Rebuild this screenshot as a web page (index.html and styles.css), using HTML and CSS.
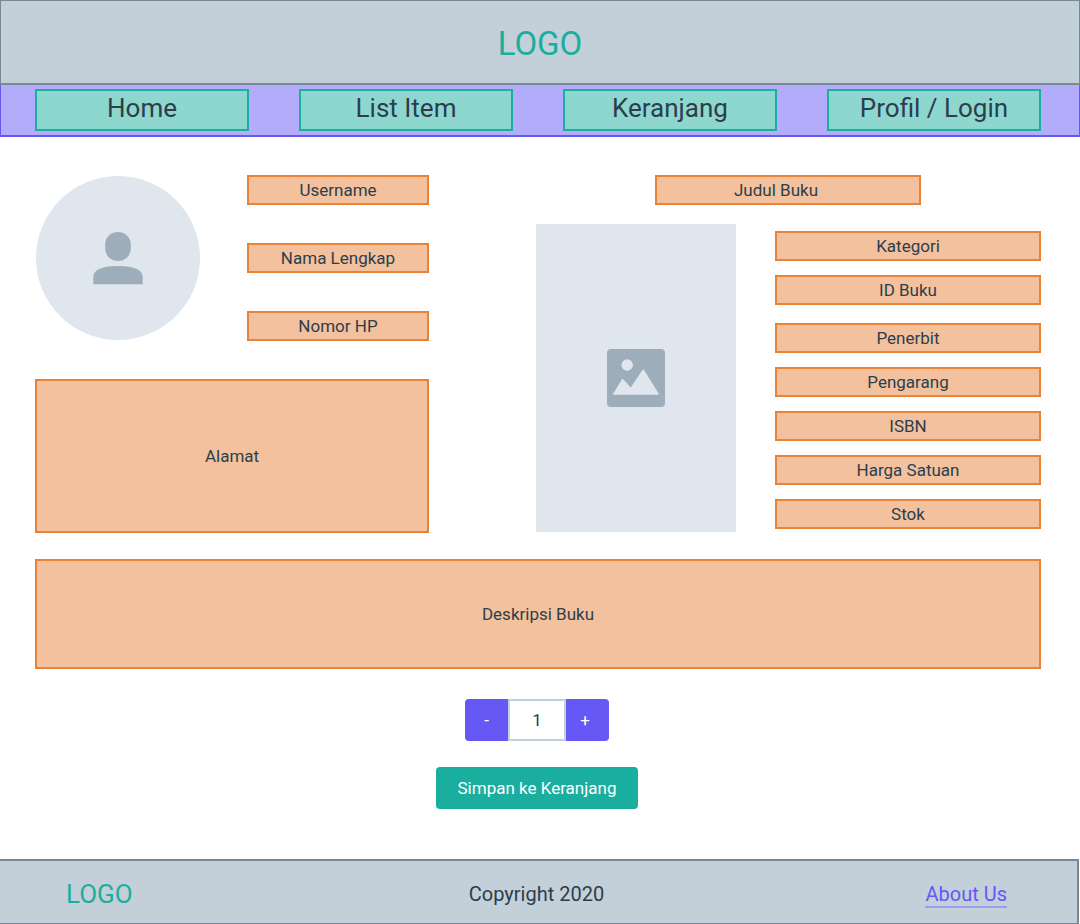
FILE: index.html
```html
<!DOCTYPE html>
<html lang="id">
<head>
<meta charset="utf-8">
<meta name="viewport" content="width=device-width, initial-scale=1">
<title>Detail Buku</title>
<link rel="stylesheet" href="styles.css">
</head>
<body>
<header class="header"><a class="header-logo" href="#">LOGO</a></header>
<nav class="nav">
  <a class="nav-link" href="#">Home</a>
  <a class="nav-link" href="#">List Item</a>
  <a class="nav-link" href="#">Keranjang</a>
  <a class="nav-link" href="#">Profil / Login</a>
</nav>
<main class="main">
  <div class="details">
    <section class="user">
      <div class="profile">
        <div class="avatar">
          <svg class="avatar-icon" viewBox="0 0 50 53" aria-hidden="true">
            <path d="M25 0C32.500 0 37.800 5.500 37.800 12.500V16C37.800 23.500 32.500 29 25 29S12.200 23.500 12.200 16V12.500C12.200 5.500 17.500 0 25 0ZM.3 52.300V45.500C.3 38 8 34 25 34S49.700 38 49.700 45.500V52.300Z"/>
          </svg>
        </div>
        <div class="profile-fields">
          <div class="field">Username</div>
          <div class="field">Nama Lengkap</div>
          <div class="field">Nomor HP</div>
        </div>
      </div>
      <div class="field address">Alamat</div>
    </section>
    <section class="book">
      <div class="field book-title">Judul Buku</div>
      <div class="book-body">
        <div class="cover">
          <svg class="cover-icon" viewBox="0 0 58 58" aria-hidden="true">
            <path fill-rule="evenodd" d="M4 0H54Q58 0 58 4V54Q58 58 54 58H4Q0 58 0 54V4Q0 0 4 0ZM20.200 10.200A5.800 5.800 0 1 0 20.200 21.800A5.800 5.800 0 1 0 20.200 10.200ZM6.300 44.500Q5.700 45.700 7 45.700H51Q52.300 45.700 51.700 44.500L37 21Q36.200 19.800 35.400 21L23.800 38.500L16.200 30.300Q15.500 29.500 14.900 30.500Z"/>
          </svg>
        </div>
        <div class="book-fields">
          <div class="field-group">
            <div class="field">Kategori</div>
            <div class="field">ID Buku</div>
          </div>
          <div class="field-group">
            <div class="field">Penerbit</div>
            <div class="field">Pengarang</div>
            <div class="field">ISBN</div>
            <div class="field">Harga Satuan</div>
            <div class="field">Stok</div>
          </div>
        </div>
      </div>
    </section>
  </div>
  <div class="field description">Deskripsi Buku</div>
  <form class="order">
    <div class="stepper">
      <button class="step step-minus" type="button">-</button>
      <input class="quantity" type="text" inputmode="numeric" value="1" aria-label="Jumlah">
      <button class="step step-plus" type="button">+</button>
    </div>
    <button class="save" type="button">Simpan ke Keranjang</button>
  </form>
</main>
<footer class="footer">
  <a class="footer-logo" href="#">LOGO</a>
  <span class="copyright">Copyright 2020</span>
  <div class="footer-end"><a class="about" href="#">About Us</a></div>
</footer>
</body>
</html>
```

FILE: styles.css
```css
* { box-sizing: border-box; }

body {
  margin: 0;
  min-height: 100vh;
  display: flex;
  flex-direction: column;
  background: #fff;
  color: #2c3e4c;
  font-family: Roboto, "Liberation Sans", sans-serif;
  font-size: 17px;
  line-height: 24px;
}

a { color: inherit; text-decoration: none; }
button, input { font: inherit; }

.header {
  display: flex;
  justify-content: center;
  padding: 22px 0 19px;
  background: #c3cfd9;
  border: 1px solid #788896;
  border-bottom-width: 2px;
}
.header-logo { color: #1aae9f; font-size: 33px; line-height: 41px; }

.nav {
  display: grid;
  grid-template-columns: repeat(4, 1fr);
  gap: 50px;
  padding: 4px 38px 4px 34px;
  background: #b2acfa;
  border: solid #6558f5;
  border-width: 0 1px 2px;
}
.nav-link {
  padding: 1px 0 5px;
  background: #8dd7cf;
  border: 2px solid #1aae9f;
  font-size: 26px;
  line-height: 32px;
  text-align: center;
}

.main {
  flex: 1;
  padding: 38px 39px 48px 35px;
}
.details { display: flex; justify-content: space-between; gap: 40px; }
.user { flex: 0 1 394px; }
.book { flex: 0 1 506px; }

.field {
  display: flex;
  align-items: center;
  justify-content: center;
  min-height: 30px;
  background: #f3c19d;
  border: 2px solid #e8833a;
}
.profile { display: flex; justify-content: space-between; }
.profile-fields {
  width: 182px;
  display: flex;
  flex-direction: column;
  gap: 38px;
}
.avatar {
  display: flex;
  align-items: center;
  justify-content: center;
  width: 164px;
  height: 164px;
  margin: 1px;
  border-radius: 50%;
  background: #dfe6ed;
}
.avatar-icon { width: 50px; height: 53px; fill: #9eadba; }
.address { min-height: 154px; margin-top: 38px; }

.book-title { width: 266px; margin: 0 auto; padding-right: 24px; }
.book-body {
  display: flex;
  justify-content: space-between;
  padding: 19px 0 0 1px;
}
.cover {
  display: flex;
  align-items: center;
  justify-content: center;
  width: 200px;
  height: 308px;
  background: #dfe6ed;
}
.cover-icon { width: 58px; height: 58px; fill: #9eadba; }
.book-fields {
  display: flex;
  flex-direction: column;
  gap: 18px;
  width: 266px;
  padding-top: 7px;
}
.field-group { display: flex; flex-direction: column; gap: 14px; }
.description { min-height: 110px; margin-top: 26px; }

.order {
  display: flex;
  flex-direction: column;
  align-items: center;
  gap: 26px;
  margin-top: 30px;
  padding-right: 2px;
}
.stepper { display: flex; }
.step, .quantity { height: 42px; padding: 0; text-align: center; }
.step { width: 43px; border: 0; background: #6558f5; color: #fff; }
.step-minus { border-radius: 4px 0 0 4px; }
.step-plus { padding-right: 5px; border-radius: 0 4px 4px 0; }
.quantity {
  width: 58px;
  border: 2px solid #c3cfd9;
  background: #fff;
  color: #2c3e4c;
}
.save {
  min-width: 202px;
  padding: 9px 16px;
  border: 0;
  border-radius: 4px;
  background: #1aae9f;
  color: #fff;
}

.footer {
  display: grid;
  grid-template-columns: 1fr auto 1fr;
  align-items: center;
  margin-right: 1px;
  padding: 17px 70px 13px 66px;
  background: #c3cfd9;
  border: solid #788896;
  border-width: 2px 2px 1px 0;
}
.footer-logo { color: #1aae9f; font-size: 26px; line-height: 32px; }
.copyright, .about { font-size: 20px; line-height: 24px; }
.footer-end { display: flex; justify-content: flex-end; }
.about { padding-top: 2px; color: #6558f5; border-bottom: 2px solid #a39bf0; }
```
